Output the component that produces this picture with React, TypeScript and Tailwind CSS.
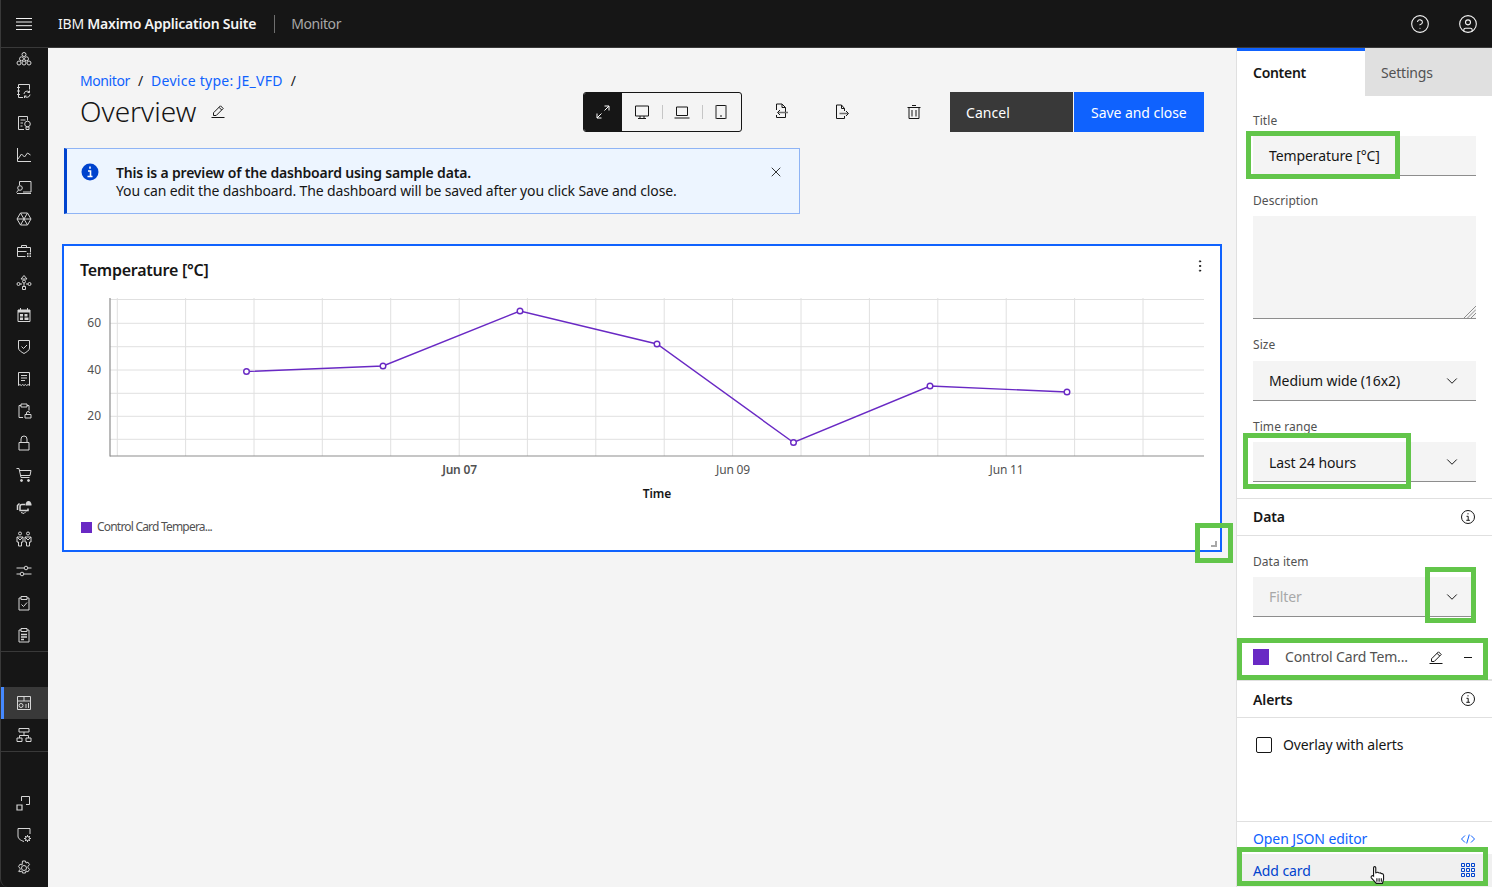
import React from "react";
import { CircleHelp, CircleUser, ChevronDown, X, EllipsisVertical } from "lucide-react";

const S = ({ children, size = 16, className = "", sw = 1 }: { children: React.ReactNode; size?: number; className?: string; sw?: number }) => (
  <svg width={size} height={size} viewBox="0 0 16 16" fill="none" stroke="currentColor" strokeWidth={sw} className={className}>
    {children}
  </svg>
);

const Edit = ({ className = "" }: { className?: string }) => (
  <S size={16} className={className}>
    <path d="M1.500 14.500h13" />
    <path d="M3.500 12.500v-2.700l7-7 2.700 2.700-7 7z" />
    <path d="M9 4.300l2.700 2.700" />
  </S>
);

const InfoOutline = () => (
  <S size={16} className="text-[#161616]">
    <circle cx="8" cy="8" r="6.500" />
    <path d="M8 4.200v1.200M6.500 7.300H8.200v4M6.300 11.300h3.600" />
  </S>
);

const navIcons: React.ReactNode[] = [
  <><circle cx="8" cy="3.500" r="2" /><circle cx="5.500" cy="7.800" r="2" /><circle cx="10.500" cy="7.800" r="2" /><circle cx="3" cy="12" r="2" /><circle cx="8" cy="12" r="2" /><circle cx="13" cy="12" r="2" /></>,
  <><path d="M7 1.500H2.500v13H7M7 1.500h6.500v5" /><path d="M1 4.500h3M1 8h3M1 11.500h3" /><path d="M8 11a3 3 0 0 1 5.300-1.800M14 11.500a3 3 0 0 1-5.400 1.600M13.500 7.500v2h-2M8.500 15v-2h2" /></>,
  <><path d="M8 14.500H2.500v-13h9v4" /><path d="M4.500 5h5M4.500 8h2.500M4.500 11h2" /><circle cx="11.500" cy="9" r="2.800" /><path d="M10 12h3v2.500h-3z" /></>,
  <><path d="M1.500 1v13.500H15" /><path d="M2 12l3.500-5 3 3 3-4 3 2" /></>,
  <><path d="M3.500 6V2.500H15v10.500H7" /><circle cx="4" cy="9" r="2.300" /><path d="M2.500 11L.5 13.500M1 14.500h14" /></>,
  <><path d="M4.500 2h7L15 8l-3.500 6h-7L1 8z" /><path d="M4.500 2l7 12M11.500 2l-7 12M1 8h14" /></>,
  <><path d="M9.500 13.500h-8v-9h13v5" /><path d="M5.500 4.500v-2h5v2M1.500 8.500h9" /><path d="M11 10h1.500v1.500H11zM13.500 10H15v1.500h-1.500zM11 12.500h1.500V14H11zM13.500 12.500H15V14h-1.500z" fill="currentColor" stroke="none" /></>,
  <><path d="M8 .5l3 3.500H5z" /><circle cx="8" cy="6.500" r="1.500" /><circle cx="2.500" cy="9" r="1.500" /><circle cx="13.500" cy="9" r="1.500" /><path d="M6.500 11.500h3v3h-3zM4 9h2M10 9h2M8 8v3.500" /></>,
  <><path d="M2 3h12v11.500H2z" /><path d="M4.500 1v3M11.500 1v3" /><path d="M2 3h12v2.500H2zM4 7h3v2.500H4zM8.500 7h3v2.500h-3zM8.500 10.500h4v2.500h-4zM4 10.500h3v2.500H4z" fill="currentColor" stroke="none" /></>,
  <><path d="M2.500 1.500h11v7.500c0 2.500-3 4-5.500 5.500C5.500 13 2.500 11.500 2.500 9z" /><path d="M5.500 7.500l2 2 3.500-3.500" /></>,
  <><path d="M2.500 1.500h11v13l-1.400-1-1.400 1-1.300-1-1.400 1-1.400-1-1.300 1-1.400-1-1.400 1z" /><path d="M5 4.500h6M5 7h6M5 9.500h4" /></>,
  <><path d="M7 14.500H3v-12h2M11 2.500h2v5" /><path d="M5 1h6v3H5z" /><path d="M9 11.500h6v3.500H9zM10.500 11.500V10a1.500 1.500 0 0 1 3 0" /></>,
  <><path d="M3 7.500h10v7.500H3z" /><path d="M5 7.500V4a3 3 0 0 1 6 0v3.500" /></>,
  <><path d="M.5 1.500h2.500l2 9h8.500M3.500 3.500H15L14 8.500H4.500" /><circle cx="5.500" cy="13.500" r="1" fill="currentColor" /><circle cx="12.500" cy="13.500" r="1" fill="currentColor" /></>,
  <><path d="M9 5.500H6a2 2 0 0 0-2 2v4h8v-2" strokeWidth="1.500" /><path d="M1.500 11V6.500l2-2" strokeWidth="1.500" /><path d="M10 4.500a2.500 2.500 0 0 1 5 0h.5v2h-6v-2z" fill="currentColor" stroke="none" /><path d="M5 13.500l3 1 2-2" /></>,
  <><circle cx="4" cy="2.500" r="1.500" /><circle cx="12" cy="2.500" r="1.500" /><path d="M1 6h6v5H5.500v4h-3v-4H1zM9 6h6v5h-1.500v4h-3v-4H9z" /><path d="M1 6l3 3 3-3M9 6l3 3 3-3" /></>,
  <><path d="M.5 5h15M.5 11h15" /><circle cx="10" cy="5" r="1.800" fill="#161616" /><circle cx="6" cy="11" r="1.800" fill="#161616" /></>,
  <><path d="M5 3H3v12h10V3h-2" /><path d="M5 1.500h6v3H5z" /><path d="M5.500 9.500l2 2 3.500-4" /></>,
  <><path d="M5 3H3v12h10V3h-2" /><path d="M5 1.500h6v3H5z" /><path d="M5 7.500h6M5 10h6M5 12.500h3" strokeWidth="1.300" /></>,
];

const lowerIcons: React.ReactNode[] = [
  <><path d="M5.500 6V1.500h8v8H10" /><path d="M1 10h5v5H1z" strokeWidth="1.200" /></>,
  <><path d="M8 14.500C5 13.500 2 12 2 9V1.500h12v5.500" /><circle cx="11.500" cy="11.500" r="2" /><path d="M11.500 8v1.500M11.500 13.500V15M8 11.500h1.500M13.500 11.500H15M9 9l1 1M13 13l1 1M9 14l1-1M13 10l1-1" /></>,
  <g transform="translate(0 1)"><circle cx="8" cy="8" r="2.500" /><path d="M6.500 1h3l.5 2 2-.8 1.500 2.500-1.500 1.500v1.600l1.500 1.500-1.500 2.500-2-.8-.5 2h-3l-.5-2-2 .8L2.500 11.300 4 9.800V8.200L2.500 6.700 4 4.200l2 .8z" /></g>,
];

const NavIcon = ({ children, active = false }: { children: React.ReactNode; active?: boolean }) => (
  <div className={`h-8 flex items-center justify-center text-[#d6d6d6] shrink-0 ${active ? "bg-[#393939] border-l-[3px] border-[#4589ff] pr-[4px]" : "pr-px"}`}>
    <S size={16}>{children}</S>
  </div>
);

const Label = ({ children }: { children: React.ReactNode }) => (
  <div className="text-[12px] leading-4 text-[#525252] tracking-[0.05px] pt-px h-4">{children}</div>
);

const Field = ({ children, className = "" }: { children: React.ReactNode; className?: string }) => (
  <div className={`h-10 bg-[#f4f4f4] border-b border-[#8d8d8d] flex items-center justify-between pl-4 pr-4 text-[14px] text-[#161616] tracking-[-0.1px] ${className}`}>
    {children}
  </div>
);

const Chevron = ({ className = "" }: { className?: string }) => <ChevronDown size={18} strokeWidth={1.3} className={`text-[#161616] -mr-[1px] ${className}`} />;

const GreenBox = ({ className }: { className: string }) => (
  <div className={`absolute border-[5px] border-[#62c54a] pointer-events-none ${className}`} />
);

const gx = [117.3, 185.6, 254, 322.3, 390.7, 459.2, 527.4, 595.8, 664.2, 732.6, 801, 869.4, 937.8, 1006.2, 1074.6, 1143];
const gy = [299.5, 323.3, 346.7, 370, 393.3, 416.3, 439.3];
const pts: [number, number][] = [[246.5, 371.5], [383, 366], [520, 311], [657, 344], [793.5, 442.5], [930, 386], [1067, 392]];

const Chart = () => (
  <svg width="1156" height="230" viewBox="64 290 1156 230" className="block">
    {gx.map((x) => <line key={x} x1={x} x2={x} y1="298" y2="456" stroke="#e0e0e0" />)}
    {gy.map((y) => <line key={y} x1="110" x2="1204" y1={y} y2={y} stroke="#e0e0e0" />)}
    <line x1="110" x2="110" y1="298" y2="456.500" stroke="#8d8d8d" strokeWidth="1.200" />
    <line x1="110" x2="1204" y1="456" y2="456" stroke="#8d8d8d" strokeWidth="1.200" />
    <polyline points={pts.map((p) => p.join(",")).join(" ")} fill="none" stroke="#6929c4" strokeWidth="1.400" />
    {pts.map(([x, y]) => <circle key={x} cx={x} cy={y} r="2.800" fill="#fff" stroke="#6929c4" strokeWidth="1.400" />)}
    <g fontSize="12" fill="#525252" textAnchor="end">
      <text x="101" y="327">60</text>
      <text x="101" y="374">40</text>
      <text x="101" y="420">20</text>
    </g>
    <g fontSize="12" fill="#525252" textAnchor="middle" letterSpacing="-0.2">
      <text x="459.500" y="474" fontWeight="600">Jun 07</text>
      <text x="733" y="474">Jun 09</text>
      <text x="1006.500" y="474">Jun 11</text>
    </g>
    <text x="657" y="498" fontSize="12" fontWeight="600" fill="#161616" textAnchor="middle" letterSpacing="-0.1">Time</text>
  </svg>
);

export default function App() {
  return (
    <div className="relative w-[1492px] h-[887px] overflow-hidden flex flex-col bg-[#161616]" style={{ fontFamily: '"Noto Sans", "Open Sans", sans-serif' }}>
      <header className="h-12 shrink-0 bg-[#161616] border-b border-[#393939] border-l flex items-center text-[#f4f4f4] text-[14px]">
        <div className="w-12 flex justify-center -ml-px">
          <svg width="16" height="12" viewBox="0 0 16 12" stroke="#f4f4f4" strokeWidth="1"><path d="M0 .5h16M0 4h16M0 7.700h16M0 11.500h16" /></svg>
        </div>
        <div className="ml-[10px] tracking-[-0.22px]">IBM <span className="font-semibold">Maximo Application Suite</span></div>
        <div className="w-px h-[18px] bg-[#6f6f6f] ml-[18px]" />
        <div className="ml-4 text-[#a8a8a8] tracking-[-0.41px]">Monitor</div>
        <div className="ml-auto flex items-center gap-7 pr-[14px]">
          <CircleHelp size={20} strokeWidth={1.3} />
          <CircleUser size={20} strokeWidth={1.3} />
        </div>
      </header>

      <div className="flex-1 flex min-h-0">
        <nav className="w-12 shrink-0 bg-[#161616] border-l border-[#393939] flex flex-col rounded-bl-lg overflow-hidden">
          <div className="-mt-[5px] flex flex-col">
            {navIcons.map((n, i) => <NavIcon key={i}>{n}</NavIcon>)}
          </div>
          <div className="h-px bg-[#393939] shrink-0" />
          <div className="h-[35px] shrink-0" />
          <NavIcon active>
            <path d="M1.500 1.500h13v13h-13zM1.500 6h13M8 1.500V6" />
            <circle cx="5" cy="10.500" r="2" />
            <path d="M10 9v4M12.500 8v5" />
          </NavIcon>
          <NavIcon>
            <path d="M3 1.500h10v3.500H3zM1 11h5v3.500H1zM10 11h5v3.500h-5zM8 5v3.500M3.500 11V8.500h9V11" />
          </NavIcon>
          <div className="h-px bg-[#393939] shrink-0" />
          <div className="h-[35px] shrink-0" />
          {lowerIcons.map((n, i) => <NavIcon key={i}>{n}</NavIcon>)}
        </nav>

        <main className="flex-1 bg-[#f4f4f4] min-w-0 pl-8 pr-8 pt-6">
          <div className="flex items-end justify-between h-[60px]">
            <div>
              <div className="text-[14px] leading-[18px] text-[#161616] flex gap-2">
                <span className="text-[#0f62fe] tracking-[-0.41px]">Monitor</span><span>/</span>
                <span className="text-[#0f62fe] tracking-[0.26px]">Device type: JE_VFD</span><span>/</span>
              </div>
              <div className="flex items-center h-[42px] gap-[14px]">
                <h1 className="text-[28px] leading-9 text-[#161616] font-light">Overview</h1>
                <Edit className="text-[#161616]" />
              </div>
            </div>
            <div className="flex items-center">
              <div className="flex h-10 w-[159px] border border-[#161616] rounded-[3px] overflow-hidden text-[#161616] mr-[32px]">
                <div className="w-[38px] bg-[#161616] text-white flex items-center justify-center">
                  <S size={16}><path d="M9.500 2h4.500v4.500M14 2L9.500 6.500M6.500 14H2V9.500M2 14l4.500-4.500" /></S>
                </div>
                <div className="flex-1 flex items-center pl-3">
                  <S size={16}><path d="M1.500 2h13v10h-13zM6 12v2.500M10 12v2.500M4 14.500h8" /></S>
                  <div className="w-px h-[14px] bg-[#c6c6c6] ml-3" />
                  <S size={16} className="ml-[11px]"><path d="M2.500 3h11v8.500h-11zM.5 14h15" /></S>
                  <div className="w-px h-[14px] bg-[#c6c6c6] ml-3" />
                  <S size={16} className="ml-[10px]"><path d="M3 1.500h10v13H3zM7 12h2" /><path d="M3 1.500v13" stroke="#8d8d8d" strokeWidth="1.600" /><path d="M13 1.500v13" stroke="#8d8d8d" strokeWidth="1.600" /></S>
                </div>
              </div>
              <div className="flex items-center text-[#161616] mr-[28px]">
                <S size={16} className="-mt-[3px] -ml-px"><path d="M3.500 7V1h5.500l3.500 3.500V14.500H3.500V12" /><path d="M9 1v3.500h3.500" /><path d="M15 9.500H5" stroke="#6f6f6f" strokeWidth="1.500" /><path d="M7 7L4.500 9.500 7 12" /></S>
                <div className="w-[45px]" />
                <S size={16}><path d="M10.500 4.500V7M10.500 12V14.500H2.500V1h5l3 3.500" /><path d="M7.500 1v3.500h3" /><path d="M5.500 9.500H14" stroke="#6f6f6f" strokeWidth="1.500" /><path d="M12 7l2.500 2.500L12 12" /></S>
                <div className="w-14" />
                <S size={16}><path d="M1.500 3.500h13M6 1.500h4M3 3.500v11h10v-11M6 6v6.500M10 6v6.500" /></S>
              </div>
              <div className="w-[123px] h-10 bg-[#393939] text-white text-[14px] tracking-[0.05px] flex items-center pl-4">Cancel</div>
              <div className="w-px" />
              <div className="w-[130px] h-10 bg-[#0f62fe] text-white text-[14px] tracking-[-0.05px] flex items-center pl-[17px]">Save and close</div>
            </div>
          </div>

          <div className="mt-4 -ml-4 w-[736px] h-[66px] bg-[#edf5ff] border border-[#8fb4f5] border-l-[3px] border-l-[#0043ce] flex text-[14px] leading-[18px] text-[#161616]">
            <svg width="18" height="18" viewBox="0 0 18 18" className="ml-[14px] mt-[14px] shrink-0">
              <circle cx="9" cy="9" r="8.500" fill="#0043ce" />
              <path d="M9 3.500v2.200M7 8h2.500v5.500M6.500 13.500h5" stroke="#fff" strokeWidth="1.600" fill="none" />
            </svg>
            <div className="ml-[17px] pt-[15px]">
              <div className="font-semibold tracking-[-0.18px]">This is a preview of the dashboard using sample data.</div>
              <div className="tracking-[-0.13px]">You can edit the dashboard. The dashboard will be saved after you click Save and close.</div>
            </div>
            <X size={16} strokeWidth={1.3} className="ml-auto mr-[15px] mt-[15px] shrink-0" />
          </div>

          <section className="mt-[30px] -ml-[18px] w-[1160px] h-[308px] bg-white border-2 border-[#0f62fe] relative flex flex-col">
            <div className="flex items-center justify-between h-11 shrink-0 pl-4 pr-[12px] pt-1">
              <div className="text-[16px] font-semibold text-[#161616] tracking-[-0.25px]">Temperature [°C]</div>
              <EllipsisVertical size={16} strokeWidth={1.5} className="text-[#161616] -mt-2" />
            </div>
            <Chart />
            <div className="pl-[17px] flex items-center gap-[5px] text-[12px] text-[#525252] -mt-[2px]">
              <div className="w-[11px] h-[11px] bg-[#6929c4]" />
              <span className="tracking-[-0.8px]">Control Card Tempera...</span>
            </div>
            <div className="absolute right-[3px] bottom-[3px] w-[6px] h-[6px] border-r-2 border-b-2 border-[#a8a8a8]" />
          </section>
        </main>

        <aside className="w-[256px] shrink-0 bg-white border-l border-[#e0e0e0] flex flex-col">
          <div className="flex h-12 shrink-0 text-[14px]">
            <div className="w-[128px] border-t-[3px] border-[#0f62fe] font-semibold text-[#161616] flex items-center pl-4 tracking-[-0.3px] pb-[3px]">Content</div>
            <div className="flex-1 bg-[#e0e0e0] text-[#525252] flex items-center pl-4 tracking-[-0.2px]">Settings</div>
          </div>
          <div className="px-4 pt-4 pr-4">
            <div className="w-[223px]">
              <Label>Title</Label>
              <Field className="mt-2"><span>Temperature [°C]</span></Field>
              <div className="mt-4"><Label>Description</Label></div>
              <div className="mt-2 h-[103px] bg-[#f4f4f4] border-b border-[#8d8d8d] relative">
                <svg width="13" height="13" viewBox="0 0 13 13" stroke="#8d8d8d" className="absolute right-0 bottom-0"><path d="M13 1L1 13M13 4.500L4.500 13M13 8L8 13" /></svg>
              </div>
              <div className="mt-[17px]"><Label>Size</Label></div>
              <Field className="mt-[9px]">Medium wide (16x2)<Chevron /></Field>
              <div className="mt-[17px]"><Label>Time range</Label></div>
              <Field className="mt-2"><span className="mt-px">Last 24 hours</span><Chevron /></Field>
            </div>
          </div>
          <div className="mt-4 border-t border-[#e0e0e0] h-[37px] shrink-0 flex items-center justify-between pl-4 pr-4 text-[14px] font-semibold text-[#161616] tracking-[-0.1px]">
            <span className="-mt-[2px]">Data</span><InfoOutline />
          </div>
          <div className="border-t border-[#e0e0e0] px-4 pt-[17px]">
            <Label>Data item</Label>
            <Field className="mt-2 w-[223px] text-[#a8a8a8]">Filter<Chevron /></Field>
          </div>
          <div className="h-[38px] mt-[22px] shrink-0 flex items-center pl-4 pr-4 text-[14px] text-[#525252] tracking-[-0.15px]">
            <div className="w-4 h-4 bg-[#6929c4] -mt-[2px]" />
            <span className="ml-4 -mt-[3px]">Control Card Tem...</span>
            <Edit className="ml-auto text-[#161616] -mt-[3px]" />
            <S size={16} className="ml-[16px] text-[#161616] -mt-[3px]"><path d="M4 8.500h8" /></S>
          </div>
          <div className="mt-[2px] border-t-2 border-[#e0e0e0] h-[38px] shrink-0 flex items-center justify-between pl-4 pr-4 text-[14px] font-semibold text-[#161616] tracking-[-0.1px]">
            Alerts<InfoOutline />
          </div>
          <div className="border-t border-[#e0e0e0] h-[104px] shrink-0 pl-[19px] pt-[19px] flex items-start gap-[11px] text-[14px] text-[#161616] tracking-[-0.13px]">
            <div className="w-4 h-4 border border-[#161616] rounded-[2px]" />
            <span className="leading-[18px] -mt-[1px]">Overlay with alerts</span>
          </div>
          <div className="border-t border-[#e0e0e0] h-[27px] shrink-0 flex items-end justify-between pl-4 pr-4 text-[14px] text-[#0f62fe] tracking-[-0.1px]">
            <span className="leading-[18px]">Open JSON editor</span>
            <S size={16} className="mb-[1px]"><path d="M5 4.500L1.500 8 5 11.500M11 4.500L14.500 8 11 11.500M9.300 3.500L6.700 12.500" /></S>
          </div>
          <div className="flex-1 bg-[#f0f0f0] flex items-center justify-between pl-4 pr-[17px] text-[14px] text-[#0043ce] tracking-[-0.1px] mt-[6px] pb-[1px]">
            <span>Add card</span>
            <svg width="14" height="14" viewBox="0 0 14 14" fill="none" stroke="#0043ce">
              <path d="M.5.5h3v3h-3zM5.500.5h3v3h-3zM10.500.5h3v3h-3zM.5 5.500h3v3h-3zM5.500 5.500h3v3h-3zM10.500 5.500h3v3h-3zM.5 10.500h3v3h-3zM5.500 10.500h3v3h-3zM10.500 10.500h3v3h-3z" />
            </svg>
          </div>
        </aside>
      </div>

      <GreenBox className="left-[1246px] top-[131px] w-[154px] h-[48px]" />
      <GreenBox className="left-[1243px] top-[433px] w-[168px] h-[56px]" />
      <GreenBox className="left-[1195px] top-[523px] w-[38px] h-[40px]" />
      <GreenBox className="left-[1425px] top-[567px] w-[51px] h-[56px]" />
      <GreenBox className="left-[1237px] top-[638px] w-[251px] h-[42px]" />
      <GreenBox className="left-[1237px] top-[847px] w-[251px] h-[39px]" />

      <svg width="20" height="20" viewBox="0 0 18 18" className="absolute left-[1368px] top-[865px]" fill="#fff" stroke="#161616" strokeWidth="1">
        <path d="M5 9V2.500a1 1 0 0 1 2 0V7l1-.3a1 1 0 0 1 1.500.3l1 .2a1 1 0 0 1 1.300.5l.8.1c.8.1 1.400.7 1.400 1.500V13l-1 3.500H7.500L3 11.500c-.8-1 .6-2.600 2-1.500z" />
        <path d="M8 12v3M10 12v3M12 12v3" />
      </svg>
    </div>
  );
}
